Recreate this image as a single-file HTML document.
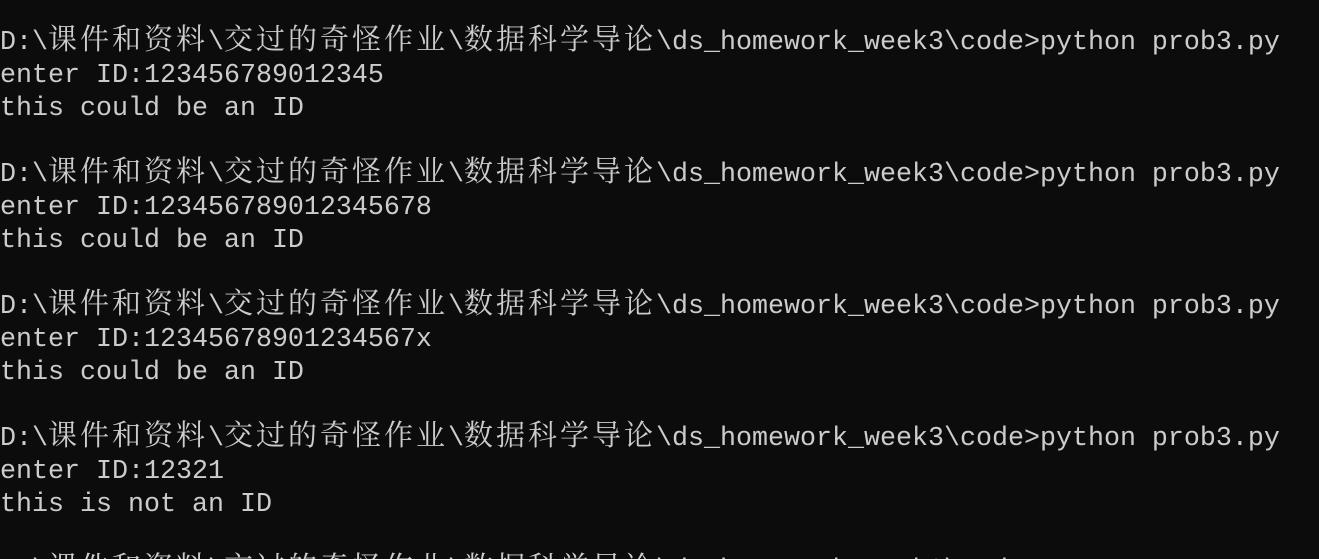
<!DOCTYPE html>
<html><head><meta charset="utf-8"><style>
html,body{margin:0;padding:0;background:#0c0c0c;width:1319px;height:559px;overflow:hidden}
#w{position:relative;width:1319px;height:559px;overflow:hidden}
.l{position:absolute;left:0;height:33px;line-height:33px;font-family:"Liberation Mono",monospace;font-size:26.67px;color:#cccccc;white-space:pre}
.c{font-family:"Noto Serif CJK SC","Noto Sans CJK SC",serif;font-size:29px;letter-spacing:3px;line-height:1px;display:inline-block;vertical-align:baseline}
</style></head><body><div id="w">
<div class="l" style="top:27px">D:\<span class="c">课件和资料</span>\<span class="c">交过的奇怪作业</span>\<span class="c">数据科学导论</span>\ds_homework_week3\code&gt;python prob3.py</div>
<div class="l" style="top:60px">enter ID:123456789012345</div>
<div class="l" style="top:93px">this could be an ID</div>
<div class="l" style="top:159px">D:\<span class="c">课件和资料</span>\<span class="c">交过的奇怪作业</span>\<span class="c">数据科学导论</span>\ds_homework_week3\code&gt;python prob3.py</div>
<div class="l" style="top:192px">enter ID:123456789012345678</div>
<div class="l" style="top:225px">this could be an ID</div>
<div class="l" style="top:291px">D:\<span class="c">课件和资料</span>\<span class="c">交过的奇怪作业</span>\<span class="c">数据科学导论</span>\ds_homework_week3\code&gt;python prob3.py</div>
<div class="l" style="top:324px">enter ID:12345678901234567x</div>
<div class="l" style="top:357px">this could be an ID</div>
<div class="l" style="top:423px">D:\<span class="c">课件和资料</span>\<span class="c">交过的奇怪作业</span>\<span class="c">数据科学导论</span>\ds_homework_week3\code&gt;python prob3.py</div>
<div class="l" style="top:456px">enter ID:12321</div>
<div class="l" style="top:489px">this is not an ID</div>
<div style="position:absolute;left:0;top:544px;width:1319px;height:15px;overflow:hidden"><div class="l" style="top:11px">D:\<span class="c">课件和资料</span>\<span class="c">交过的奇怪作业</span>\<span class="c">数据科学导论</span>\ds_homework_week3\code&gt;</div></div>
</div></body></html>
